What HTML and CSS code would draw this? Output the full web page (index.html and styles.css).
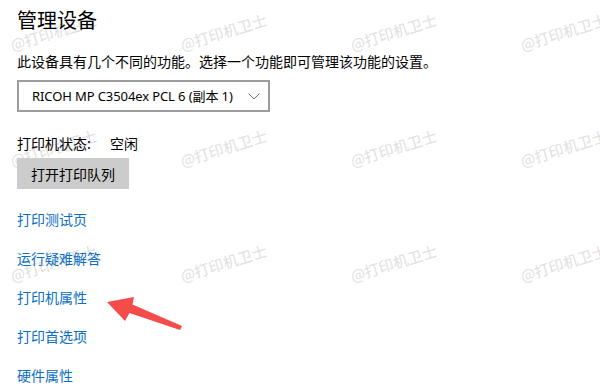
FILE: index.html
```html
<!DOCTYPE html>
<html lang="zh-CN">
<head>
<meta charset="utf-8">
<link rel="stylesheet" href="styles.css">
</head>
<body>
<div class="page">
  <h1 class="title">管理设备</h1>
  <p class="desc">此设备具有几个不同的功能。选择一个功能即可管理该功能的设置。</p>
  <div class="select">
    <span class="select-text">RICOH MP C3504ex PCL 6 (副本 1)</span>
    <svg class="chevron" width="12" height="7" viewBox="0 0 12 7"><path d="M0.5 0.5 L6 6 L11.5 0.5" fill="none" stroke="#6e6e6e" stroke-width="1"/></svg>
  </div>
  <div class="status"><span class="status-label">打印机状态:</span><span>空闲</span></div>
  <button class="btn">打开打印队列</button>
  <nav class="links">
    <a class="link">打印测试页</a>
    <a class="link">运行疑难解答</a>
    <a class="link">打印机属性</a>
    <a class="link">打印首选项</a>
    <a class="link">硬件属性</a>
  </nav>
  <div class="watermarks">
    <span class="wm">@打印机卫士</span><span class="wm">@打印机卫士</span><span class="wm">@打印机卫士</span><span class="wm">@打印机卫士</span>
    <span class="wm">@打印机卫士</span><span class="wm">@打印机卫士</span><span class="wm">@打印机卫士</span><span class="wm">@打印机卫士</span>
    <span class="wm">@打印机卫士</span><span class="wm">@打印机卫士</span><span class="wm">@打印机卫士</span><span class="wm">@打印机卫士</span>
  </div>
  <svg class="arrow" width="600" height="392" viewBox="0 0 600 392"><path d="M107 302 L134 297 L132.5 304.5 L182 326 L180 330 L129.5 313 L125 321 Z" fill="#f44c4a"/></svg>
</div>
</body>
</html>
```
FILE: styles.css
```css
html, body {
  margin: 0;
  padding: 0;
  background: #ffffff;
}
.page {
  position: relative;
  isolation: isolate;
  width: 600px;
  height: 392px;
  overflow: hidden;
  padding-left: 17px;
  box-sizing: border-box;
  font-family: "Noto Sans CJK SC", sans-serif;
  color: #000;
  display: flex;
  flex-direction: column;
  align-items: flex-start;
}
.title {
  margin: 6px 0 0;
  font-size: 20px;
  font-weight: 400;
  line-height: 28px;
}
.desc {
  margin: 17px 0 0;
  font-size: 14px;
  line-height: 20px;
}
.select {
  margin-top: 9px;
  width: 253px;
  height: 32px;
  box-sizing: border-box;
  border: 2px solid #9c9c9c;
  display: flex;
  align-items: center;
  justify-content: space-between;
  padding: 0 8px 0 13px;
}
.select-text {
  font-family: "Noto Sans", "Noto Sans CJK SC", sans-serif;
  font-size: 13px;
  letter-spacing: -0.1px;
  line-height: 20px;
  white-space: nowrap;
}
.chevron {
  display: block;
  flex: none;
}
.status {
  margin-top: 21px;
  font-size: 14px;
  line-height: 20px;
  display: flex;
}
.status-label {
  width: 93px;
}
.btn {
  margin-top: 5px;
  width: 112px;
  height: 31px;
  border: none;
  background: #cccccc;
  font-family: "Noto Sans CJK SC", sans-serif;
  font-size: 14px;
  color: #000;
  padding: 0;
}
.links {
  margin-top: 20px;
  display: flex;
  flex-direction: column;
  gap: 19px;
}
.link {
  font-size: 14px;
  line-height: 20px;
  color: #0a6ec4;
}
.watermarks {
  position: absolute;
  z-index: -1;
  left: 0;
  top: 0;
  width: 700px;
  height: 400px;
  padding: 37px 0 0 13px;
  box-sizing: border-box;
  display: grid;
  grid-template-columns: repeat(4, 170px);
  grid-auto-rows: 115.5px;
  align-items: start;
  justify-items: start;
  pointer-events: none;
}
.wm {
  font-size: 15px;
  line-height: 15px;
  color: #e0e0e0;
  white-space: nowrap;
  transform-origin: left bottom;
  transform: rotate(-17deg);
}
.arrow {
  position: absolute;
  left: 0;
  top: 0;
  pointer-events: none;
}
```
